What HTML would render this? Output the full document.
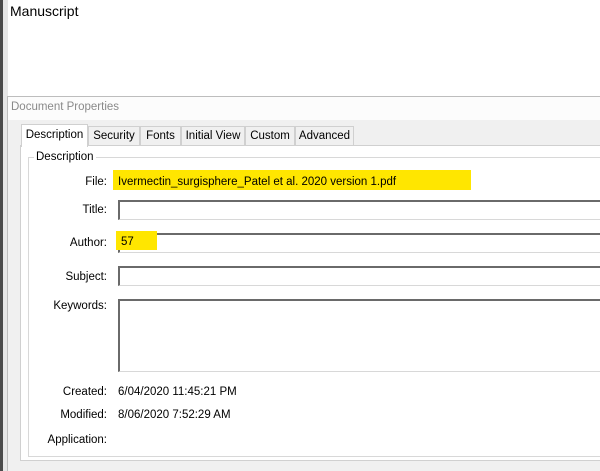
<!DOCTYPE html>
<html style="overflow:hidden;width:600px;height:471px"><head><style>
body{margin:0;width:600px;height:471px;background:#fff;position:relative;overflow:hidden;font-family:"Liberation Sans",sans-serif;font-size:11.5px;color:#000}
.a{position:absolute}
.lbl{position:absolute;right:493px;text-align:right}
.inp{position:absolute;left:118px;width:490px;background:#fff;border-top:2px solid #6a6a6a;border-left:2px solid #6a6a6a;border-bottom:1px solid #d8d8d8;box-sizing:border-box}
.tab{position:absolute;top:126px;height:19px;line-height:19px;background:#f0f0f0;border:1px solid #d0d0d0;border-bottom:none;text-align:center;box-sizing:border-box}
</style></head><body>
<div class="a" style="left:0;top:0;width:3px;height:471px;background:#4a4a4a"></div>
<div class="a" style="left:3px;top:0;width:5px;height:471px;background:#e6e6e6"></div>
<div class="a" style="left:10px;top:3px;font-size:14px">Manuscript</div>
<div class="a" style="left:7px;top:96px;width:600px;height:380px;background:#f0f0f0;border-top:1px solid #bdbdbd;border-left:1px solid #bdbdbd"></div>
<div class="a" style="left:8px;top:97px;width:600px;height:23px;background:#fcfcfc"></div>
<div class="a" style="left:11px;top:101px;color:#8a8a8a;font-size:11.5px">Document Properties</div>
<div class="a" style="left:20px;top:145px;width:590px;height:316px;background:#fff;border:1px solid #d0d0d0;box-sizing:border-box"></div>
<div class="a" style="left:21px;top:124px;width:67px;height:23px;background:#fff;border:1px solid #d0d0d0;border-bottom:none;line-height:20px;text-align:center;box-sizing:border-box">Description</div>
<div class="tab" style="left:88px;width:52px">Security</div>
<div class="tab" style="left:140px;width:41px">Fonts</div>
<div class="tab" style="left:181px;width:64px">Initial View</div>
<div class="tab" style="left:245px;width:50px">Custom</div>
<div class="tab" style="left:295px;width:59px">Advanced</div>
<div class="a" style="left:28px;top:157px;width:600px;height:298px;border:1px solid #d8d8d8"></div>
<div class="a" style="left:34px;top:151px;background:#fff;padding:0 2px">Description</div>
<div class="a" style="left:113px;top:170px;width:358px;height:20px;background:#ffe600"></div>
<div class="lbl" style="top:176px">File:</div>
<div class="a" style="left:118px;top:176px">Ivermectin_surgisphere_Patel et al. 2020 version 1.pdf</div>
<div class="lbl" style="top:204px">Title:</div>
<div class="inp" style="top:200px;height:20px"></div>
<div class="lbl" style="top:237px">Author:</div>
<div class="inp" style="top:233px;height:20px"></div>
<div class="a" style="left:116px;top:231px;width:41px;height:19px;background:#ffe600"></div>
<div class="a" style="left:121px;top:236px">57</div>
<div class="lbl" style="top:271px">Subject:</div>
<div class="inp" style="top:266px;height:20px"></div>
<div class="lbl" style="top:300px">Keywords:</div>
<div class="inp" style="top:299px;height:73px"></div>
<div class="lbl" style="top:386px">Created:</div>
<div class="a" style="left:118px;top:386px">6/04/2020 11:45:21 PM</div>
<div class="lbl" style="top:409px">Modified:</div>
<div class="a" style="left:118px;top:409px">8/06/2020 7:52:29 AM</div>
<div class="lbl" style="top:434px">Application:</div>
</body></html>
